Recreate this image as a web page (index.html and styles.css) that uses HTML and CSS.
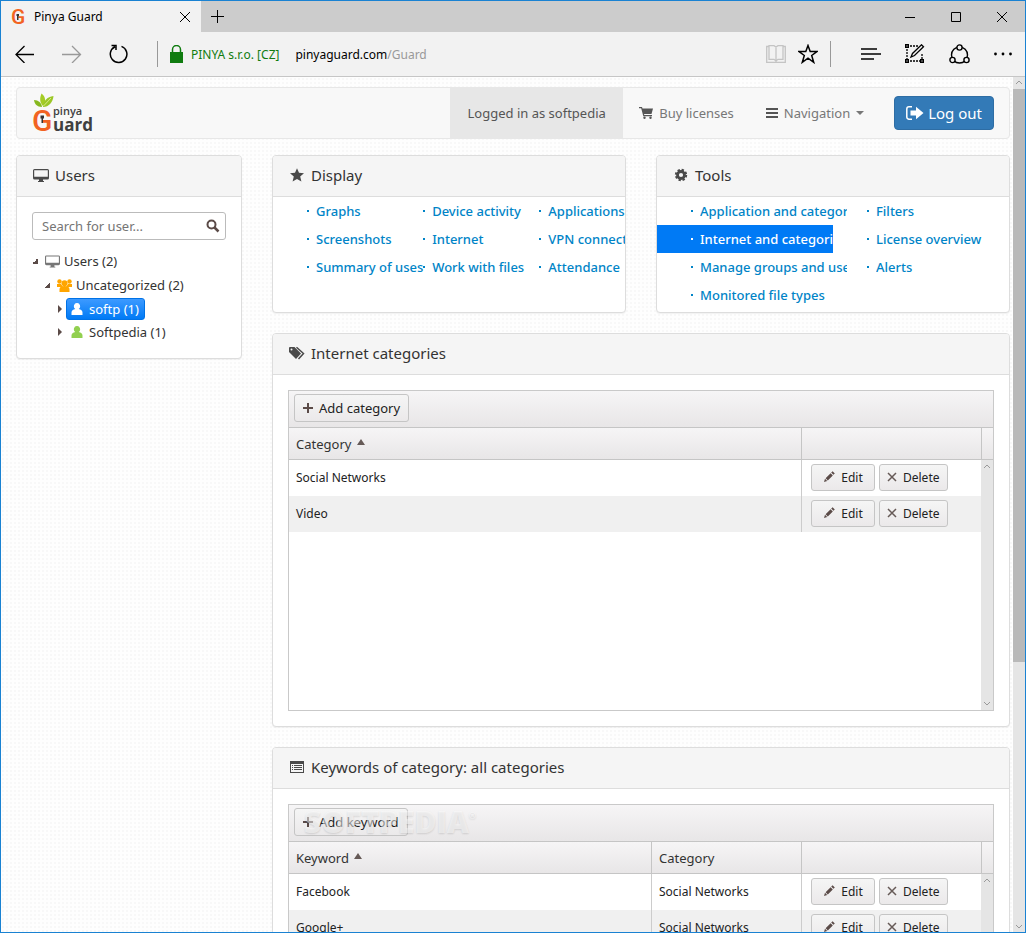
FILE: index.html
```html
<!DOCTYPE html>
<html lang="en">
<head>
    <meta charset="UTF-8">
    <meta name="viewport" content="width=device-width, initial-scale=1.0">
    <title>Pinya Guard</title>
    <link rel="stylesheet" href="styles.css">
</head>
<body>

    <svg class="sprite" width="0" height="0" aria-hidden="true">
        <symbol id="pencil" viewBox="0 0 12 12">
            <path d="M1 11l1-3.2L4.2 10z M2.6 7.2l5-5 2.2 2.2-5 5z M8.2 1.6L9.6.2l2.2 2.2-1.4 1.4z"/>
        </symbol>
        <symbol id="cross" viewBox="0 0 10 10">
            <path d="M1 1l8 8M9 1L1 9" fill="none" stroke="#665a57" stroke-width="1.5"/>
        </symbol>
        <symbol id="plus" viewBox="0 0 10 10">
            <path d="M5 0v10M0 5h10" fill="none" stroke="#5b4b48" stroke-width="2"/>
        </symbol>
        <symbol id="user" viewBox="0 0 12 12">
            <path d="M6 0a3 3.2 0 0 1 1.7 5.9C10 6.4 11.5 7.4 11.5 9.500V12H.5V9.500C.5 7.400 2 6.400 4.300 5.900A3 3.200 0 0 1 6 0z"/>
        </symbol>
        <symbol id="screen" viewBox="0 0 16 13">
            <path d="M1.500 0h13A1.500 1.500 0 0 1 16 1.500V9a1.500 1.500 0 0 1-1.500 1.500H10V12h1v1H5v-1h1v-1.500H1.500A1.500 1.500 0 0 1 0 9V1.500A1.500 1.500 0 0 1 1.500 0zM1.200 1.200v6.600h13.600V1.200z" fill-rule="evenodd"/>
        </symbol>
    </svg>

    <header class="browser">
        <div class="tab-bar">
            <div class="tab">
                <svg class="logo" width="16" height="18" viewBox="0 0 16 18">
                    <text class="logo-g" x="0" y="16" font-size="21">G</text>
                    <path d="M5.500 6H8v2H7.500v4H6V8h-.5z" fill="#333"/>
                </svg>
                <span class="tab-title">Pinya Guard</span>
                <button class="tab-close" aria-label="Close tab">
                    <svg width="12" height="12" viewBox="0 0 12 12"><path d="M1 1l10 10M11 1L1 11"/></svg>
                </button>
            </div>
            <button class="new-tab" aria-label="New tab">
                <svg width="14" height="14" viewBox="0 0 14 14"><path d="M6.500 0v13M0 6.500h13"/></svg>
            </button>
            <div class="window-buttons">
                <button aria-label="Minimize"><svg width="10" height="10" viewBox="0 0 10 10"><path d="M0 5.500h10"/></svg></button>
                <button aria-label="Maximize"><svg width="10" height="10" viewBox="0 0 10 10"><path d="M.5.5h9v9h-9z"/></svg></button>
                <button aria-label="Close"><svg width="10" height="10" viewBox="0 0 10 10"><path d="M0 0l10 10M10 0L0 10"/></svg></button>
            </div>
        </div>
        <div class="address-bar">
            <button class="wide" aria-label="Back"><svg width="20" height="18" viewBox="0 0 20 18"><path d="M19 9.500H1M9.500 1L1 9.500 9.500 18" stroke-width="1.300"/></svg></button>
            <button class="wide disabled" aria-label="Forward"><svg width="20" height="18" viewBox="0 0 20 18"><path d="M0 9.500h18M10 1l8.500 8.500L10 18" stroke-width="1.300"/></svg></button>
            <button class="wide" aria-label="Refresh"><svg width="20" height="20" viewBox="0 0 20 20"><path d="M12.500 2.400A8.300 8.300 0 1 1 6 2.700M2.500 1.500H7v4.500" stroke-width="1.500"/></svg></button>
            <div class="address">
                <svg width="15" height="18" viewBox="0 0 15 18"><path d="M3.500 8V4.500a4 4 0 0 1 8 0V8" fill="none" stroke="#107c10" stroke-width="1.500"/><path d="M1 7h13v11H1z" fill="#107c10"/></svg>
                <span class="cert">PINYA s.r.o. [CZ]</span>
                <span class="url">pinyaguard.com<span class="path">/Guard</span></span>
            </div>
            <button class="small faded" aria-label="Reading view"><svg width="20" height="18" viewBox="0 0 20 18"><path d="M3 1.500H.700v15.800h18.600V1.500H17M3 .7h5L10 2l2-1.300h5v13.600h-5L10 16l-2-1.700H3zM10 2v15" stroke-width="1.300"/></svg></button>
            <button class="small" aria-label="Favorites"><svg width="20" height="20" viewBox="0 0 20 20"><path d="M10 1.500l2.200 6H19l-5.300 4 2 6.800L10 14.200l-5.700 4.100 2-6.800L1 7.500h6.800z" stroke-width="1.500"/></svg></button>
            <span class="divider"></span>
            <button aria-label="Hub"><svg width="20" height="12" viewBox="0 0 20 12"><path d="M0 1h16M0 6h20M0 11h13" stroke-width="1.500"/></svg></button>
            <button aria-label="Make a note"><svg width="20" height="20" viewBox="0 0 20 20"><path d="M5 2h8M2 5v10M17 10v5M5 17h10" stroke-width="1.300" stroke-dasharray="2 1"/><path d="M.700.700h2.600v2.600H.700zM.700 15.700h2.600v2.600H.700zM15.700 15.700h2.600v2.600h-2.600z" stroke-width="1.400"/><path d="M6 13l1.500-3.500L16.500.8l2 2-9 8.700z" stroke-width="1.300"/></svg></button>
            <button aria-label="Share"><svg width="21" height="21" viewBox="0 0 21 21"><circle cx="10.500" cy="11" r="8" stroke-width="1.400"/><g fill="#f2f2f2" stroke-width="1.400"><circle cx="10.500" cy="3.500" r="2.600"/><circle cx="3.500" cy="16" r="2.600"/><circle cx="17.500" cy="16" r="2.600"/></g></svg></button>
            <button aria-label="More"><svg width="18" height="4" viewBox="0 0 18 4"><g fill="#000" stroke="none"><circle cx="1.500" cy="2" r="1.400"/><circle cx="9" cy="2" r="1.400"/><circle cx="16.500" cy="2" r="1.400"/></g></svg></button>
        </div>
    </header>

    <div class="viewport">
        <div class="page">
            <nav class="navbar">
                <a href="#" class="brand" aria-label="pinya Guard">
                    <svg class="logo" width="62" height="42" viewBox="0 0 62 42">
                        <path d="M10 13C6 9 7 4 8.500.5c4 3 5 8 1.500 12.500z" fill="#a4cc25"/>
                        <path d="M9 14C4 14 1.500 11 1 7c4.500 0 7.500 3 8 7z" fill="#86b81f"/>
                        <path d="M10 14c0-6 4-10 10.500-11-.5 6-4.500 11-10.500 11z" fill="#9bc727"/>
                        <path d="M10.500 13L18 5" stroke="#d8eb8a" fill="none"/>
                        <text class="logo-g" x="-1" y="38" font-size="30">G</text>
                        <path d="M7.500 22.500h3.500v3h-1V30H8.500v-4.500h-1z" fill="#333"/>
                        <text class="logo-small" x="20" y="22">pinya</text>
                        <text class="logo-big" x="20" y="38">uard</text>
                    </svg>
                </a>
                <a href="#" class="nav-item current">Logged in as softpedia</a>
                <a href="#" class="nav-item">
                    <svg width="14" height="12" viewBox="0 0 14 12"><path d="M0 0h3l.5 1.500H14L12.500 7H5l.3 1H13v1.200H4.300L2.200 1.200H0z"/><circle cx="5.500" cy="10.800" r="1.200"/><circle cx="11.500" cy="10.800" r="1.200"/></svg>
                    Buy licenses
                </a>
                <a href="#" class="nav-item">
                    <svg width="12" height="10" viewBox="0 0 12 10"><path d="M0 0h12v2H0zM0 4h12v2H0zM0 8h12v2H0z"/></svg>
                    Navigation
                    <span class="caret"></span>
                </a>
                <button class="logout">
                    <svg width="18" height="14" viewBox="0 0 18 14"><path d="M6 .8H3A2.200 2.200 0 0 0 .8 3v8A2.200 2.200 0 0 0 3 13.200h3" fill="none" stroke="#fff" stroke-width="1.500"/><path d="M4.500 4.500H10V.8L17.500 7 10 13.200V9.500H4.500z" fill="#fff"/></svg>
                    Log out
                </button>
            </nav>

            <div class="columns">
                <aside class="panel">
                    <h2>
                        <svg width="16" height="13"><use href="#screen"/></svg>
                        Users
                    </h2>
                    <div class="panel-body">
                        <div class="search">
                            <input type="text" aria-label="Search for user" placeholder="Search for user...">
                            <svg width="14" height="14" viewBox="0 0 14 14"><circle cx="5.500" cy="5.500" r="4" fill="none" stroke="#5b4b48" stroke-width="2"/><path d="M8.500 8.500l4 4" stroke="#5b4b48" stroke-width="2.500"/></svg>
                        </div>
                        <ul class="tree">
                            <li>
                                <span class="node"><i class="open"></i><svg width="15" height="13" fill="#777"><use href="#screen"/></svg><span>Users (2)</span></span>
                                <ul>
                                    <li>
                                        <span class="node"><i class="open"></i><svg width="15" height="13" viewBox="0 0 15 13" fill="#ffa500"><circle cx="2.500" cy="2.500" r="2.200"/><circle cx="12.500" cy="2.500" r="2.200"/><path d="M0 5h4l2 3H0zM15 5h-4L9 8h6z"/><circle cx="7.500" cy="4.300" r="3"/><path d="M2.500 13v-3c0-2 2-3 5-3s5 1 5 3v3z"/></svg><span>Uncategorized (2)</span></span>
                                        <ul class="users">
                                            <li><span class="node"><i class="closed"></i><span class="leaf selected"><svg width="12" height="12" fill="#fff"><use href="#user"/></svg>softp (1)</span></span></li>
                                            <li><span class="node"><i class="closed"></i><span class="leaf"><svg width="12" height="12" fill="#92d050"><use href="#user"/></svg>Softpedia (1)</span></span></li>
                                        </ul>
                                    </li>
                                </ul>
                            </li>
                        </ul>
                    </div>
                </aside>

                <main>
                    <div class="menus">
                        <section class="panel">
                            <h2>
                                <svg width="16" height="14" viewBox="0 0 16 14"><path d="M8 .3l2 4.500 5 .5-3.800 3.200 1.200 5L8 10.900l-4.400 2.600 1.200-5L1 5.300l5-.5z"/></svg>
                                Display
                            </h2>
                            <ul class="links three">
                                <li><a href="#">Graphs</a></li>
                                <li><a href="#">Device activity</a></li>
                                <li><a href="#">Applications</a></li>
                                <li><a href="#">Screenshots</a></li>
                                <li><a href="#">Internet</a></li>
                                <li><a href="#">VPN connection</a></li>
                                <li><a href="#">Summary of uses</a></li>
                                <li><a href="#">Work with files</a></li>
                                <li><a href="#">Attendance</a></li>
                            </ul>
                        </section>
                        <section class="panel">
                            <h2>
                                <svg width="16" height="14" viewBox="0 0 16 14"><circle cx="8" cy="7" r="3.500" fill="none" stroke="#4a4a4a" stroke-width="2.800"/><circle cx="8" cy="7" r="5.200" fill="none" stroke="#4a4a4a" stroke-width="2" stroke-dasharray="2.300 1.784"/></svg>
                                Tools
                            </h2>
                            <ul class="links two">
                                <li><a href="#">Application and categories</a></li>
                                <li><a href="#">Filters</a></li>
                                <li class="active"><a href="#">Internet and categories</a></li>
                                <li><a href="#">License overview</a></li>
                                <li><a href="#">Manage groups and users</a></li>
                                <li><a href="#">Alerts</a></li>
                                <li><a href="#">Monitored file types</a></li>
                            </ul>
                        </section>
                    </div>

                    <section class="panel">
                        <h2>
                            <svg width="16" height="14" viewBox="0 0 16 14"><path d="M0 2q0-1 1-1h4.500L12 7.500 7 13 0 6z"/><circle cx="2.500" cy="3.400" r="1" fill="#f5f5f5"/><path d="M7.500 1.300l7 6.200L9.500 13" fill="none" stroke="#4a4a4a" stroke-width="1.500"/></svg>
                            Internet categories
                        </h2>
                        <div class="panel-body">
                            <div class="grid">
                                <div class="toolbar">
                                    <button class="btn"><svg width="10" height="10"><use href="#plus"/></svg>Add category</button>
                                </div>
                                <div class="grid-content">
                                    <table>
                                        <colgroup><col><col class="actions"><col class="filler"></colgroup>
                                        <thead>
                                            <tr><th>Category <span class="sort"></span></th><th></th><th></th></tr>
                                        </thead>
                                        <tbody>
                                            <tr>
                                                <td>Social Networks</td>
                                                <td><button class="btn"><svg width="12" height="12"><use href="#pencil"/></svg>Edit</button><button class="btn delete"><svg width="10" height="10"><use href="#cross"/></svg>Delete</button></td>
                                                <td></td>
                                            </tr>
                                            <tr>
                                                <td>Video</td>
                                                <td><button class="btn"><svg width="12" height="12"><use href="#pencil"/></svg>Edit</button><button class="btn delete"><svg width="10" height="10"><use href="#cross"/></svg>Delete</button></td>
                                                <td></td>
                                            </tr>
                                        </tbody>
                                    </table>
                                    <div class="grid-scroll">
                                        <svg width="8" height="5" viewBox="0 0 8 5"><path d="M1 4l3-3 3 3"/></svg>
                                        <svg width="8" height="5" viewBox="0 0 8 5"><path d="M1 1l3 3 3-3"/></svg>
                                    </div>
                                </div>
                            </div>
                        </div>
                    </section>

                    <section class="panel">
                        <h2>
                            <svg width="16" height="12" viewBox="0 0 16 12"><path d="M1 0h14v12H1zM2 3v8h12V3z" fill-rule="evenodd"/><path d="M3 4h1v1H3zM5 4h8v1H5zM3 6h1v1H3zM5 6h8v1H5zM3 8h1v1H3zM5 8h8v1H5z"/></svg>
                            Keywords of category: all categories
                        </h2>
                        <div class="panel-body">
                            <div class="grid">
                                <div class="toolbar">
                                    <button class="btn"><svg width="10" height="10"><use href="#plus"/></svg>Add keyword</button>
                                    <span class="watermark">SOFTPEDIA<sup>®</sup></span>
                                </div>
                                <div class="grid-content">
                                    <table>
                                        <colgroup><col><col class="category"><col class="actions"><col class="filler"></colgroup>
                                        <thead>
                                            <tr><th>Keyword <span class="sort"></span></th><th>Category</th><th></th><th></th></tr>
                                        </thead>
                                        <tbody>
                                            <tr>
                                                <td>Facebook</td>
                                                <td>Social Networks</td>
                                                <td><button class="btn"><svg width="12" height="12"><use href="#pencil"/></svg>Edit</button><button class="btn delete"><svg width="10" height="10"><use href="#cross"/></svg>Delete</button></td>
                                                <td></td>
                                            </tr>
                                            <tr>
                                                <td>Google+</td>
                                                <td>Social Networks</td>
                                                <td><button class="btn"><svg width="12" height="12"><use href="#pencil"/></svg>Edit</button><button class="btn delete"><svg width="10" height="10"><use href="#cross"/></svg>Delete</button></td>
                                                <td></td>
                                            </tr>
                                        </tbody>
                                    </table>
                                    <div class="grid-scroll">
                                        <svg width="8" height="5" viewBox="0 0 8 5"><path d="M1 4l3-3 3 3"/></svg>
                                        <svg width="8" height="5" viewBox="0 0 8 5"><path d="M1 1l3 3 3-3"/></svg>
                                    </div>
                                </div>
                            </div>
                        </div>
                    </section>
                </main>
            </div>
        </div>

        <div class="scrollbar">
            <svg width="8" height="5" viewBox="0 0 8 5"><path d="M1 4l3-3 3 3"/></svg>
            <div class="track"><div class="thumb"></div></div>
            <svg width="8" height="5" viewBox="0 0 8 5"><path d="M1 1l3 3 3-3"/></svg>
        </div>
    </div>

</body>
</html>
```

FILE: styles.css
```css
* {
    box-sizing: border-box;
}
body {
    display: flex;
    flex-direction: column;
    height: 100vh;
    margin: 0;
    border: 1px solid #1a82d2;
    overflow: hidden;
    font-family: "Noto Sans", sans-serif;
    font-size: 13px;
    color: #333;
    background-color: #fff;
}
.sprite {
    position: absolute;
}
button, input {
    font-family: inherit;
    margin: 0;
}
svg {
    flex: none;
}
a {
    text-decoration: none;
}
ul {
    list-style: none;
    margin: 0;
    padding: 0;
}

/* Browser frame */
.browser {
    flex: none;
    font-size: 12px;
    color: #000;
    background-color: #f2f2f2;
    border-bottom: 1px solid #c6c6c6;
}
.browser button {
    display: flex;
    align-items: center;
    justify-content: center;
    padding: 0;
    border: none;
    background: none;
}
.browser button svg {
    fill: none;
    stroke: #000;
}
.tab-bar {
    display: flex;
    height: 31px;
    background-color: #ccc;
}
.tab {
    display: flex;
    align-items: center;
    width: 200px;
    padding: 0 10px;
    background-color: #f2f2f2;
}
.tab-title {
    flex: 1;
    margin-left: 7px;
}
.new-tab {
    width: 34px;
}
.window-buttons {
    display: flex;
    margin-left: auto;
}
.window-buttons button {
    width: 46px;
}
.address-bar {
    display: flex;
    align-items: center;
    height: 44px;
}
.address-bar button {
    width: 44px;
    height: 44px;
}
.address-bar .wide {
    width: 47px;
}
.address-bar .small {
    width: 32px;
}
.address-bar .disabled svg {
    stroke: #999;
}
.address-bar .faded svg {
    stroke: #c4c4c4;
}
.address {
    display: flex;
    flex: 1;
    align-items: center;
    height: 26px;
    margin-left: 15px;
    padding-left: 11px;
    border-left: 1px solid #999;
}
.cert {
    margin: 0 16px 0 7px;
    color: #107c10;
}
.url .path {
    color: #999;
}
.divider {
    width: 1px;
    height: 26px;
    margin: 0 18px 0 6px;
    background-color: #999;
}

/* Page area */
.viewport {
    display: flex;
    flex: 1;
    min-height: 0;
}
.page {
    flex: 1;
    min-width: 0;
    padding: 10px 3px 0 15px;
    overflow: hidden;
    background-color: #fefefe;
    background-image: radial-gradient(circle, #f8f8f8 1px, transparent 1px);
    background-size: 4px 4px;
}
.scrollbar {
    display: flex;
    flex-direction: column;
    align-items: center;
    width: 12px;
    padding: 3px 0;
    background-color: #e5e5e5;
}
.scrollbar svg, .grid-scroll svg {
    fill: none;
    stroke: #999;
}
.track {
    flex: 1;
    align-self: stretch;
    margin: 4px 0;
}
.thumb {
    height: 69%;
    background-color: #b9b9b9;
}

.navbar {
    display: flex;
    align-items: center;
    height: 52px;
    margin-bottom: 16px;
    padding-right: 15px;
    background-color: #f8f8f8;
    border: 1px solid #e7e7e7;
    border-radius: 4px;
}
.brand {
    margin: 0 auto 0 16px;
    height: 40px;
}
.logo {
    overflow: visible;
}
.logo-g {
    font-family: Roboto, sans-serif;
    font-weight: 500;
    fill: #f26322;
}
.logo-small, .logo-big {
    font-family: "Open Sans", sans-serif;
    font-weight: 600;
    font-size: 11px;
    fill: #404040;
}
.logo-big {
    font-weight: 700;
    font-size: 17px;
}
.nav-item {
    display: flex;
    align-items: center;
    justify-content: center;
    align-self: stretch;
    gap: 6px;
    padding: 0 16px;
    color: #777;
    fill: #555;
}
.nav-item.current {
    min-width: 173px;
    color: #555;
    background-color: #e7e7e7;
}
.caret {
    border: 4px solid transparent;
    border-top-color: #777;
    border-bottom: 0;
}
.logout {
    display: flex;
    align-items: center;
    gap: 4px;
    height: 34px;
    margin-left: 14px;
    padding: 0 11px;
    font-size: 15px;
    color: #fff;
    background-color: #337ab7;
    border: 1px solid #2e6da4;
    border-radius: 4px;
}

.columns {
    display: grid;
    grid-template-columns: 226px 1fr;
    align-items: start;
    gap: 30px;
}
main {
    min-width: 0;
}
.panel {
    margin-bottom: 20px;
    overflow: hidden;
    background-color: #fff;
    border: 1px solid #ddd;
    border-radius: 4px;
    box-shadow: 0 1px 1px rgba(0, 0, 0, 0.05);
}
.panel h2 {
    display: flex;
    align-items: center;
    gap: 6px;
    height: 41px;
    margin: 0;
    padding: 0 0 2px 16px;
    font-size: 15px;
    font-weight: normal;
    background-color: #f5f5f5;
    border-bottom: 1px solid #ddd;
    fill: #4a4a4a;
}
.panel-body {
    padding: 15px;
}

/* Users tree */
.search {
    display: flex;
    align-items: center;
    height: 28px;
    margin-bottom: 9px;
    padding: 0 5px 0 9px;
    border: 1px solid #bbb;
    border-radius: 3px;
}
.search input {
    flex: 1;
    min-width: 0;
    padding: 0;
    border: none;
    outline: none;
    font-size: 13px;
    background: none;
}
.search input::placeholder {
    color: #757575;
}
.tree ul {
    margin-left: 12px;
}
.node {
    display: flex;
    align-items: center;
    gap: 4px;
    height: 24px;
}
.node i {
    width: 9px;
}
.node .open::before {
    content: "";
    display: block;
    width: 6px;
    height: 6px;
    background: linear-gradient(135deg, transparent 50%, #5b4b48 50%);
}
.node .closed {
    width: 6px;
}
.node .closed::before {
    content: "";
    display: block;
    width: 0;
    margin-left: 2px;
    border: 4px solid transparent;
    border-left: 4px solid #5b4b48;
    border-right: 0;
}
.users .node {
    height: 23px;
}
.leaf {
    display: flex;
    align-items: center;
    gap: 6px;
    height: 22px;
    padding: 0 5px 0 4px;
    border: 1px solid transparent;
    border-radius: 3px;
}
.selected {
    color: #fff;
    background: linear-gradient(#3d9aff, #007af5);
    border-color: #0072e6;
}

/* Link menus */
.menus {
    display: grid;
    grid-template-columns: 1fr 1fr;
    gap: 30px;
}
.links {
    display: grid;
    align-content: start;
    min-height: 115px;
}
.three {
    grid-template-columns: repeat(3, 33%);
}
.two {
    grid-template-columns: repeat(2, 50%);
}
.links li {
    display: flex;
    align-items: center;
    min-width: 0;
    height: 28px;
    padding-left: 34px;
    color: #0084c7;
    white-space: nowrap;
}
.links li::before {
    content: "";
    flex: none;
    width: 2px;
    height: 2px;
    margin-right: 7px;
    background-color: currentColor;
}
.links a {
    color: inherit;
    font-weight: 500;
}
.two a {
    flex: 1;
    min-width: 0;
    margin-right: -14px;
    overflow: hidden;
}
.links .active {
    color: #fff;
    background-color: #007af5;
}
.active a {
    margin-right: 0;
}

/* Grids */
.grid {
    border: 1px solid #c9c9c9;
}
.toolbar {
    position: relative;
    height: 36px;
    padding: 3px 5px;
    background: linear-gradient(#f6f5f6, #e8e6e7);
}
.btn {
    display: inline-flex;
    align-items: center;
    justify-content: center;
    gap: 6px;
    min-width: 64px;
    height: 27px;
    padding: 0 7px;
    font-size: 12px;
    color: #222;
    vertical-align: middle;
    background: linear-gradient(#f5f5f5, #ebe9ea);
    border: 1px solid #c5c5c5;
    border-radius: 3px;
    fill: #5b4b48;
}
.btn.delete {
    margin-left: 4px;
}
.toolbar .btn {
    height: 28px;
    padding: 0 8px;
    font-size: 13px;
}
.watermark {
    position: absolute;
    top: 0;
    left: 15px;
    font-family: "Open Sans", sans-serif;
    font-size: 30px;
    font-weight: 800;
    line-height: 34px;
    color: rgba(255, 255, 255, 0.5);
    text-shadow: 0 1px 2px rgba(0, 0, 0, 0.12);
}
.watermark sup {
    font-size: 9px;
    line-height: 0;
    vertical-align: 14px;
}
.grid-content {
    position: relative;
    min-height: 283px;
}
table {
    width: 100%;
    table-layout: fixed;
    border-collapse: separate;
    border-spacing: 0;
}
.category {
    width: 150px;
}
.actions {
    width: 180px;
}
.filler {
    width: 12px;
}
th {
    height: 33px;
    padding: 0 7px;
    font-weight: normal;
    text-align: left;
    background: linear-gradient(#f6f5f6, #e8e6e7);
    border-top: 1px solid #c5c5c5;
    border-bottom: 1px solid #c5c5c5;
}
th + th {
    border-left: 1px solid #c5c5c5;
}
td {
    height: 36px;
    padding: 0 7px 2px;
    font-size: 12px;
    color: #222;
    white-space: nowrap;
}
td + td {
    border-left: 1px solid #ccc;
}
th:last-child, td:last-child {
    padding: 0;
}
tbody tr:nth-child(even) {
    background-color: #f0f0f0;
}
td .btn:first-child {
    margin-left: 2px;
}
.sort {
    display: inline-block;
    margin: 0 0 4px 2px;
    border: 4px solid transparent;
    border-top: 0;
    border-bottom: 6px solid #665a57;
}
.grid-scroll {
    position: absolute;
    top: 33px;
    right: 0;
    bottom: 0;
    display: flex;
    flex-direction: column;
    align-items: center;
    justify-content: space-between;
    width: 12px;
    padding: 4px 0;
    background-color: #e5e5e5;
}
```
